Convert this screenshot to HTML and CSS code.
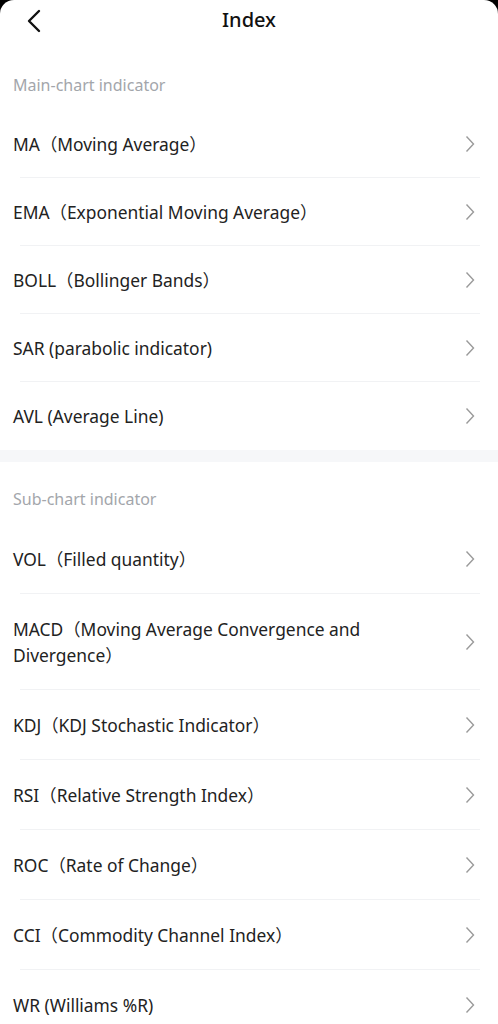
FILE: index.html
```html
<!DOCTYPE html>
<html>
<head>
<meta charset="utf-8">
<link rel="stylesheet" href="styles.css">
</head>
<body>
<div class="page">
  <header class="topbar">
    <svg class="back" width="16" height="24" viewBox="0 0 16 24"><path d="M13 2 L3 12 L13 22" fill="none" stroke="#111" stroke-width="2.4" stroke-linecap="round" stroke-linejoin="round"/></svg>
    <h1 class="title">Index</h1>
  </header>

  <section class="section section--main">
    <div class="section-title">Main-chart indicator</div>
    <div class="row"><span class="label">MA（Moving Average）</span><svg class="chev" width="10" height="18" viewBox="0 0 10 18"><path d="M1.5 1.5 L8.5 9 L1.5 16.5" fill="none" stroke="#9a9a9a" stroke-width="1.4"/></svg></div>
    <div class="row"><span class="label">EMA（Exponential Moving Average）</span><svg class="chev" width="10" height="18" viewBox="0 0 10 18"><path d="M1.5 1.5 L8.5 9 L1.5 16.5" fill="none" stroke="#9a9a9a" stroke-width="1.4"/></svg></div>
    <div class="row"><span class="label">BOLL（Bollinger Bands）</span><svg class="chev" width="10" height="18" viewBox="0 0 10 18"><path d="M1.5 1.5 L8.5 9 L1.5 16.5" fill="none" stroke="#9a9a9a" stroke-width="1.4"/></svg></div>
    <div class="row"><span class="label">SAR (parabolic indicator)</span><svg class="chev" width="10" height="18" viewBox="0 0 10 18"><path d="M1.5 1.5 L8.5 9 L1.5 16.5" fill="none" stroke="#9a9a9a" stroke-width="1.4"/></svg></div>
    <div class="row row--last"><span class="label">AVL (Average Line)</span><svg class="chev" width="10" height="18" viewBox="0 0 10 18"><path d="M1.5 1.5 L8.5 9 L1.5 16.5" fill="none" stroke="#9a9a9a" stroke-width="1.4"/></svg></div>
  </section>

  <div class="band"></div>

  <section class="section section--sub">
    <div class="section-title">Sub-chart indicator</div>
    <div class="row"><span class="label">VOL（Filled quantity）</span><svg class="chev" width="10" height="18" viewBox="0 0 10 18"><path d="M1.5 1.5 L8.5 9 L1.5 16.5" fill="none" stroke="#9a9a9a" stroke-width="1.4"/></svg></div>
    <div class="row"><span class="label">MACD（Moving Average Convergence and Divergence）</span><svg class="chev" width="10" height="18" viewBox="0 0 10 18"><path d="M1.5 1.5 L8.5 9 L1.5 16.5" fill="none" stroke="#9a9a9a" stroke-width="1.4"/></svg></div>
    <div class="row"><span class="label">KDJ（KDJ Stochastic Indicator）</span><svg class="chev" width="10" height="18" viewBox="0 0 10 18"><path d="M1.5 1.5 L8.5 9 L1.5 16.5" fill="none" stroke="#9a9a9a" stroke-width="1.4"/></svg></div>
    <div class="row"><span class="label">RSI（Relative Strength Index）</span><svg class="chev" width="10" height="18" viewBox="0 0 10 18"><path d="M1.5 1.5 L8.5 9 L1.5 16.5" fill="none" stroke="#9a9a9a" stroke-width="1.4"/></svg></div>
    <div class="row"><span class="label">ROC（Rate of Change）</span><svg class="chev" width="10" height="18" viewBox="0 0 10 18"><path d="M1.5 1.5 L8.5 9 L1.5 16.5" fill="none" stroke="#9a9a9a" stroke-width="1.4"/></svg></div>
    <div class="row"><span class="label">CCI（Commodity Channel Index）</span><svg class="chev" width="10" height="18" viewBox="0 0 10 18"><path d="M1.5 1.5 L8.5 9 L1.5 16.5" fill="none" stroke="#9a9a9a" stroke-width="1.4"/></svg></div>
    <div class="row"><span class="label">WR (Williams %R)</span><svg class="chev" width="10" height="18" viewBox="0 0 10 18"><path d="M1.5 1.5 L8.5 9 L1.5 16.5" fill="none" stroke="#9a9a9a" stroke-width="1.4"/></svg></div>
  </section>
</div>
</body>
</html>
```

FILE: styles.css
```css
* { box-sizing: border-box; }
html, body { margin: 0; padding: 0; }
body {
  background: #000;
  font-family: "Noto Sans", "Noto Sans CJK SC", sans-serif;
  color: #222;
}
.page {
  background: #fff;
  border-radius: 14px 14px 0 0;
  min-height: 1024px;
  overflow: hidden;
}
.topbar {
  height: 48px;
  display: flex;
  align-items: flex-start;
  justify-content: center;
  position: relative;
}
.back {
  position: absolute;
  left: 26px;
  top: 9px;
}
.title {
  margin: 0;
  font-size: 20px;
  font-weight: 500;
  line-height: 40px;
  color: #111;
}
.section-title {
  padding: 26px 13px 14px;
  font-size: 16px;
  line-height: 22px;
  color: #a3a6ab;
}
.row {
  display: flex;
  align-items: center;
  justify-content: space-between;
  padding: 21px 23px 21px 13px;
  position: relative;
}
.section--sub .row {
  padding: 22px 23px 22px 13px;
}
.row::after {
  content: "";
  position: absolute;
  left: 20px;
  right: 18px;
  bottom: 0;
  height: 1px;
  background: #f1f2f4;
}
.row--last::after { display: none; }
.label {
  font-size: 17.4px;
  line-height: 26px;
  max-width: 385px;
  color: #222;
}
.chev { flex: none; }
.band {
  height: 12px;
  background: #f6f7f9;
}
```
